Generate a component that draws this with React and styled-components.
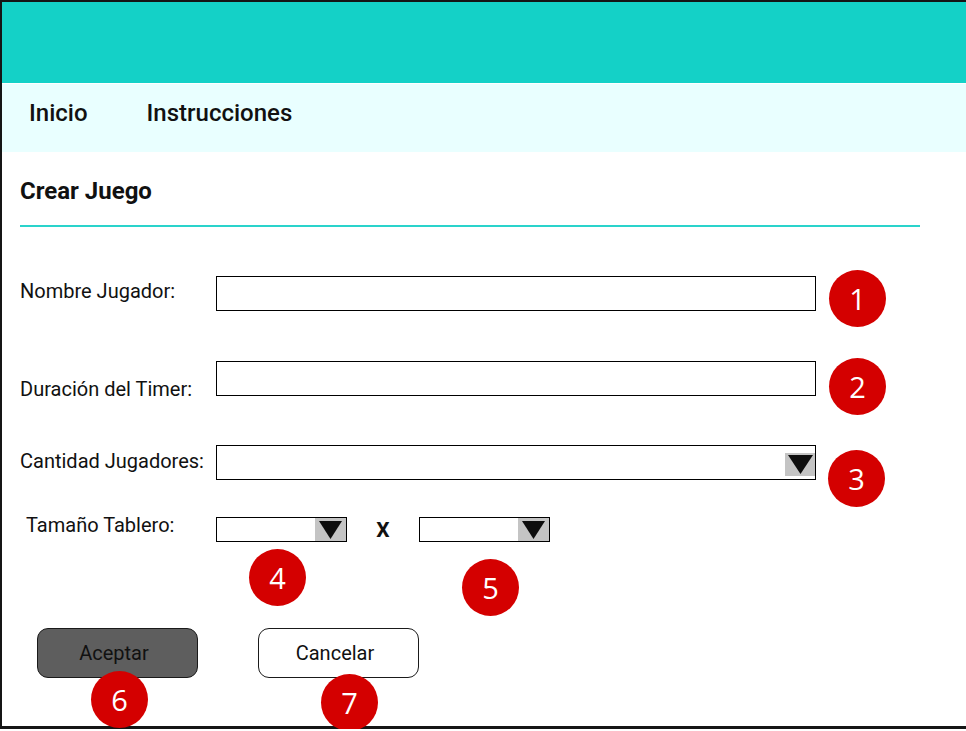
import styled, { createGlobalStyle } from 'styled-components';

const GlobalStyle = createGlobalStyle`
  html, body {
    margin: 0;
    padding: 0;
    background: #ffffff;
    overflow: hidden;
  }
  * {
    box-sizing: border-box;
  }
`;

const Frame = styled.div`
  height: 729px;
  width: 100%;
  border-top: 2px solid #151515;
  border-left: 2px solid #151515;
  border-bottom: 3px solid #151515;
  display: flex;
  flex-direction: column;
  font-family: Roboto, "Liberation Sans", sans-serif;
  color: #111;
`;

const Header = styled.div`
  height: 81px;
  background-color: #14d1c7;
`;

const Nav = styled.nav`
  margin-top: 1px;
  height: 68px;
  background-color: #e9ffff;
  display: flex;
  gap: 59px;
  padding: 15px 0 0 27px;
`;

const NavLink = styled.a`
  font-size: 24px;
  font-weight: 500;
  line-height: 28px;
  color: #111;
  text-decoration: none;
`;

const Main = styled.main`
  padding-left: 18px;
  display: flex;
  flex-direction: column;
`;

const Title = styled.h1`
  margin: 27px 0 0;
  font-size: 24px;
  font-weight: 700;
  line-height: 24px;
`;

const Divider = styled.hr`
  margin: 22px 0 0;
  width: 900px;
  height: 2px;
  border: none;
  background-color: #2ad3cb;
`;

const Row = styled.div`
  display: flex;
  align-items: flex-start;
  margin-top: ${(props) => props.$gap}px;
`;

const Label = styled.label`
  display: block;
  width: 196px;
  height: ${(props) => props.$h}px;
  flex-shrink: 0;
  font-size: 20px;
  line-height: ${(props) => props.$h}px;
  padding-left: ${(props) => props.$indent || 0}px;
  padding-top: ${(props) => Math.max(props.$shift || 0, 0)}px;
  margin-top: ${(props) => Math.min(props.$shift || 0, 0)}px;
  white-space: nowrap;
`;

const Field = styled.div`
  position: relative;
  display: flex;
  align-items: center;
`;

const TextInput = styled.input`
  width: 600px;
  height: 35px;
  border: 1px solid #000;
  border-radius: 0;
  background: #fff;
  outline: none;
`;

const Select = styled.div`
  width: ${(props) => props.$w}px;
  height: ${(props) => props.$h}px;
  border: 1px solid #000;
  background: #fff;
  display: flex;
  justify-content: flex-end;
  align-items: ${(props) => (props.$small ? 'stretch' : 'flex-end')};
  padding-bottom: ${(props) => (props.$small ? 0 : 3)}px;
`;

const ArrowBox = styled.div`
  width: ${(props) => props.$w}px;
  height: ${(props) => (props.$small ? 'auto' : '23px')};
  background-color: #c4c4c4;
  display: flex;
  align-items: center;
  justify-content: center;
`;

const Times = styled.span`
  width: 72px;
  text-align: center;
  font-size: 21px;
  font-weight: 700;
  line-height: 25px;
  margin-top: 1px;
`;

const Badge = styled.div`
  position: absolute;
  left: ${(props) => props.$x};
  top: ${(props) => props.$y}px;
  width: 57px;
  height: 57px;
  border-radius: 50%;
  background-color: #d40000;
  color: #fff;
  font-family: "Open Sans", "DejaVu Sans", sans-serif;
  font-size: 29px;
  line-height: 57px;
  text-align: center;
  z-index: 2;
`;

const Actions = styled.div`
  display: flex;
  gap: 60px;
  margin-top: 85px;
  padding-left: 17px;
`;

const ButtonWrap = styled.div`
  position: relative;
`;

const Button = styled.button`
  width: 161px;
  height: 50px;
  border-radius: 11px;
  border: 1px solid #1a1a1a;
  background-color: ${(props) => (props.$primary ? '#5e5e5e' : '#ffffff')};
  color: #111;
  font-family: Roboto, "Liberation Sans", sans-serif;
  font-size: 20px;
  padding: 0 7px 0 0;
`;

const Arrow = ({ w, h }) => (
  <svg width={w} height={h} viewBox={`0 0 ${w} ${h}`}>
    <polygon points={`0,0 ${w},0 ${w / 2},${h}`} fill="#0d0d0d" />
  </svg>
);

export default function App() {
  return (
    <>
      <GlobalStyle />
      <Frame>
        <Header />
        <Nav>
          <NavLink href="#">Inicio</NavLink>
          <NavLink href="#">Instrucciones</NavLink>
        </Nav>
        <Main>
          <Title>Crear Juego</Title>
          <Divider />

          <Row $gap={49}>
            <Label $h={35} $shift={-2}>Nombre Jugador:</Label>
            <Field>
              <TextInput />
              <Badge $x="calc(100% + 13px)" $y={-6}>1</Badge>
            </Field>
          </Row>

          <Row $gap={50}>
            <Label $h={35} $shift={11}>Duración del Timer:</Label>
            <Field>
              <TextInput />
              <Badge $x="calc(100% + 13px)" $y={-3}>2</Badge>
            </Field>
          </Row>

          <Row $gap={49}>
            <Label $h={35} $shift={-1}>Cantidad Jugadores:</Label>
            <Field>
              <Select $w={600} $h={35}>
                <ArrowBox $w={30}>
                  <Arrow w={25} h={19} />
                </ArrowBox>
              </Select>
              <Badge $x="calc(100% + 12px)" $y={5}>3</Badge>
            </Field>
          </Row>

          <Row $gap={37}>
            <Label $h={25} $indent={6} $shift={-4}>Tamaño Tablero:</Label>
            <Field>
              <Select $w={131} $h={25} $small>
                <ArrowBox $w={31} $small>
                  <Arrow w={23} h={18} />
                </ArrowBox>
              </Select>
              <Badge $x="33px" $y={32}>4</Badge>
            </Field>
            <Times>X</Times>
            <Field>
              <Select $w={131} $h={25} $small>
                <ArrowBox $w={31} $small>
                  <Arrow w={23} h={18} />
                </ArrowBox>
              </Select>
              <Badge $x="43px" $y={42}>5</Badge>
            </Field>
          </Row>

          <Actions>
            <ButtonWrap>
              <Button $primary>Aceptar</Button>
              <Badge $x="54px" $y={43}>6</Badge>
            </ButtonWrap>
            <ButtonWrap>
              <Button>Cancelar</Button>
              <Badge $x="63px" $y={46}>7</Badge>
            </ButtonWrap>
          </Actions>
        </Main>
      </Frame>
    </>
  );
}
